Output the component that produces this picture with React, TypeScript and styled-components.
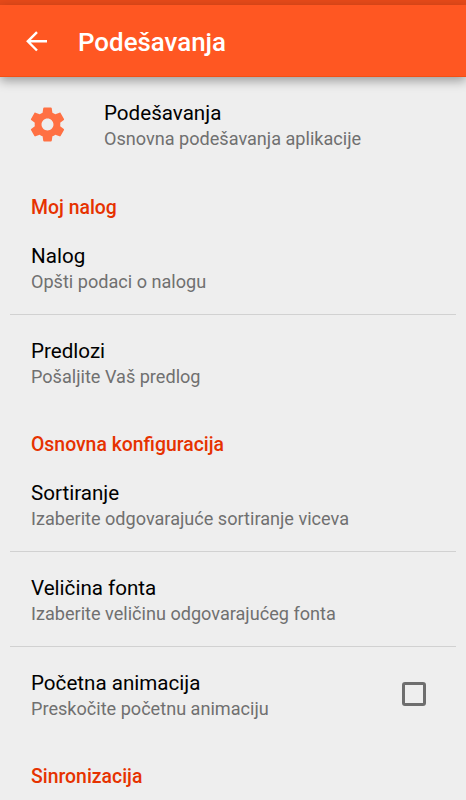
import React from "react";
import styled, { createGlobalStyle } from "styled-components";

const Global = createGlobalStyle`
  * { box-sizing: border-box; }
  body { margin: 0; background: #eeeeee; font-family: Roboto, sans-serif; overflow: hidden; }
`;
const Screen = styled.main`
  width: 466px; height: 800px; overflow: hidden; background: #eeeeee;
  display: flex; flex-direction: column;
`;
const StatusBar = styled.div`height: 5px; flex: none; background: #e64a19;`;
const AppBar = styled.header`
  height: 72px; flex: none; display: flex; align-items: center; padding: 1px 24px 0; gap: 29px;
  background: #ff5722; border-bottom: 1px solid #f44f14;
  box-shadow: 0 4px 10px rgba(0,0,0,.34);
`;
const Title = styled.h1`
  margin: 0; padding-top: 2px; color: #fff; font-size: 25.9px; line-height: 32px; font-weight: 500;
`;
const Intro = styled.section`
  display: flex; align-items: center; height: 95px; flex: none; padding-left: 26.5px; gap: 36.5px;
`;
const Gear = styled.svg`margin-top: -1px;`;
const Category = styled.h2`
  margin: 0; height: 48px; flex: none; padding: 23px 31px 0;
  color: #e63200; font-size: 19.4px; line-height: 26px; font-weight: 500;
`;
const Row = styled.div<{ $divided?: boolean }>`
  height: ${p => (p.$divided ? "95" : "94")}px; flex: none; margin: 0 10px; padding: 0 30px 0 21px;
  display: flex; align-items: center; justify-content: space-between;
  border-bottom: ${p => (p.$divided ? "1px solid #d1d1d1" : "0")};
`;
const Texts = styled.div`display: flex; flex-direction: column;`;
const Name = styled.span`
  padding-top: 3px; color: #000; font-size: 20.6px; line-height: 25px; white-space: nowrap;
`;
const Summary = styled.span`color: #707070; font-size: 18.1px; line-height: 25px; white-space: nowrap;`;
const Checkbox = styled.span`
  width: 24px; height: 24px; border: 3px solid #6e6e6e; border-radius: 3px;
`;

const Label = ({ name, summary }: { name: string; summary: string }) => (
  <Texts><Name>{name}</Name><Summary>{summary}</Summary></Texts>
);

export default function App() {
  return (
    <Screen>
      <Global />
      <StatusBar />
      <AppBar>
        <svg width="25" height="25" viewBox="0 0 25 25" fill="none" stroke="#fff" strokeWidth="2.4"><path d="M23 12.3H4M13 3.2l-9.2 9.1 9.2 9.2" /></svg>
        <Title>Podešavanja</Title>
      </AppBar>
      <Intro>
        <Gear width="41" height="41" viewBox="0 0 24 24" fill="#ff7043"><path d="M19.43 12.98c.04-.32.07-.64.07-.98s-.03-.66-.07-.98l2.11-1.65c.19-.15.24-.42.12-.64l-2-3.46c-.12-.22-.39-.3-.61-.22l-2.49 1c-.52-.4-1.08-.73-1.69-.98l-.38-2.65C14.46 2.18 14.25 2 14 2h-4c-.25 0-.46.18-.49.42l-.38 2.65c-.61.25-1.17.59-1.69.98l-2.49-1c-.23-.09-.49 0-.61.22l-2 3.46c-.13.22-.07.49.12.64l2.11 1.65c-.04.32-.07.65-.07.98s.03.66.07.98l-2.11 1.65c-.19.15-.24.42-.12.64l2 3.46c.12.22.39.3.61.22l2.49-1c.52.4 1.08.73 1.69.98l.38 2.65c.03.24.24.42.49.42h4c.25 0 .46-.18.49-.42l.38-2.65c.61-.25 1.17-.59 1.69-.98l2.49 1c.23.09.49 0 .61-.22l2-3.46c.12-.22.07-.49-.12-.64l-2.11-1.65zM12 15.5c-1.93 0-3.5-1.57-3.5-3.5s1.57-3.5 3.5-3.5 3.5 1.57 3.5 3.5-1.57 3.5-3.5 3.5z" /></Gear>
        <Label name="Podešavanja" summary="Osnovna podešavanja aplikacije" />
      </Intro>
      <Category>Moj nalog</Category>
      <Row $divided><Label name="Nalog" summary="Opšti podaci o nalogu" /></Row>
      <Row><Label name="Predlozi" summary="Pošaljite Vaš predlog" /></Row>
      <Category>Osnovna konfiguracija</Category>
      <Row $divided><Label name="Sortiranje" summary="Izaberite odgovarajuće sortiranje viceva" /></Row>
      <Row $divided><Label name="Veličina fonta" summary="Izaberite veličinu odgovarajućeg fonta" /></Row>
      <Row><Label name="Početna animacija" summary="Preskočite početnu animaciju" /><Checkbox /></Row>
      <Category>Sinronizacija</Category>
    </Screen>
  );
}
